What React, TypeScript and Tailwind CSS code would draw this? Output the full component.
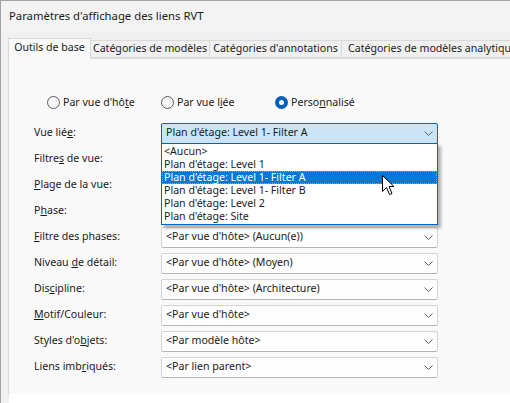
import { ReactNode } from 'react'

const rows: { label: ReactNode; value: string }[] = [
  { label: <>Vue lié<u>e</u>:</>, value: "Plan d'étage: Level 1- Filter A" },
  { label: <>Filtre<u>s</u> de vue:</>, value: '' },
  { label: <><u>P</u>lage de la vue:</>, value: '' },
  { label: <>P<u>h</u>ase:</>, value: '' },
  { label: <><u>F</u>iltre des phases:</>, value: "<Par vue d'hôte> (Aucun(e))" },
  { label: <>Niveau <u>d</u>e détail:</>, value: "<Par vue d'hôte> (Moyen)" },
  { label: <>Dis<u>c</u>ipline:</>, value: "<Par vue d'hôte> (Architecture)" },
  { label: <><u>M</u>otif/Couleur:</>, value: "<Par vue d'hôte>" },
  { label: <>Styles d'o<u>b</u>jets:</>, value: '<Par modèle hôte>' },
  { label: <>Liens imb<u>r</u>iqués:</>, value: '<Par lien parent>' },
]

const options = [
  '<Aucun>',
  "Plan d'étage: Level 1",
  "Plan d'étage: Level 1- Filter A",
  "Plan d'étage: Level 1- Filter B",
  "Plan d'étage: Level 2",
  "Plan d'étage: Site",
]

function Chevron() {
  return (
    <svg width="9" height="5" viewBox="0 0 9 5" className="shrink-0">
      <path d="M0.5 0.5 L4.5 4.5 L8.5 0.5" fill="none" stroke="#606060" strokeWidth="1" />
    </svg>
  )
}

function Radio({ checked, children }: { checked?: boolean; children: ReactNode }) {
  return (
    <div className="flex items-center gap-[3px]">
      {checked ? (
        <span className="flex h-[13px] w-[13px] items-center justify-center rounded-full bg-[#005fb8]">
          <span className="h-[5px] w-[5px] rounded-full bg-white" />
        </span>
      ) : (
        <span className="h-[13px] w-[13px] rounded-full border border-[#5d5d5d] bg-[#f6f6f6]" />
      )}
      <span>{children}</span>
    </div>
  )
}

export default function App() {
  return (
    <div className="relative h-[403px] w-[510px] overflow-hidden border-l border-t border-[#a3a3a3] bg-[#f0f0f0] font-['Noto_Sans',sans-serif] text-[10.6px] text-[#1a1a1a]">
      <div className="flex h-[30px] items-center bg-[#f3f3f3] pl-[8px] text-[11.3px]">
        Paramètres d'affichage des liens RVT
      </div>
      <div className="flex h-[27px] items-end whitespace-nowrap pl-[7px]">
        <div className="relative z-10 -mb-px flex h-[21px] w-[83px] shrink-0 items-center justify-center border border-b-0 border-[#d9d9d9] bg-[#f9f9f9] pb-[3px]">
          Outils de base
        </div>
        <div className="flex h-[18px] w-[119px] shrink-0 items-center justify-center border border-l-0 border-[#d9d9d9]">
          Catégories de modèles
        </div>
        <div className="flex h-[18px] w-[132px] shrink-0 items-center justify-center border border-l-0 border-[#d9d9d9]">
          Catégories d'annotations
        </div>
        <div className="flex h-[18px] w-[180px] shrink-0 items-center border border-l-0 border-[#d9d9d9] pl-[6px]">
          Catégories de modèles analytique
        </div>
      </div>
      <div className="ml-[7px] h-[336px] border-l border-t border-[#d9d9d9] bg-[#f9f9f9]">
        <div className="mt-[34px] flex h-[20px] items-center pl-[38px]">
          <div className="w-[114px]">
            <Radio>Par vue d'hô<u>t</u>e</Radio>
          </div>
          <div className="w-[114px]">
            <Radio>Par vue l<u>i</u>ée</Radio>
          </div>
          <Radio checked>Perso<u>n</u>nalisé</Radio>
        </div>
        <div className="relative mt-[7px] flex flex-col pl-[25px]">
          {rows.map((r, i) => (
            <div key={i} className="flex h-[26px] items-center">
              <div className="w-[127px]">{r.label}</div>
              {i === 0 ? (
                <div className="flex h-[21px] w-[277px] items-center justify-between rounded-[2px] border border-[#0067c0] bg-[#cce4f7] pl-[4px] pr-[4px]">
                  <span>{r.value}</span>
                  <Chevron />
                </div>
              ) : i < 4 ? null : (
                <div className="flex h-[21px] w-[277px] items-center justify-between rounded-[2px] border border-[#d4d4d4] border-b-[#b5b5b5] bg-[#fdfdfd] pl-[4px] pr-[4px]">
                  <span>{r.value}</span>
                  <Chevron />
                </div>
              )}
            </div>
          ))}
          <div className="absolute left-[152px] top-[23px] w-[277px] border border-[#0067c0] bg-white py-px shadow-[3px_3px_3px_rgba(0,0,0,0.3)]">
            {options.map((o, i) =>
              i === 2 ? (
                <div
                  key={i}
                  className="flex h-[13px] items-center border border-dotted border-[#f7941d] bg-[#0078d7] pl-[1px] leading-none text-white"
                >
                  {o}
                </div>
              ) : (
                <div key={i} className="flex h-[13px] items-center pl-[2px] leading-none">
                  {o}
                </div>
              ),
            )}
          </div>
        </div>
      </div>
      <div className="ml-[8px] h-[10px] bg-white" />
      <svg
        className="absolute left-[381px] top-[174px]"
        width="13"
        height="21"
        viewBox="0 0 13 21"
      >
        <path
          d="M0.5 0.5 L0.5 16.5 L4.5 12.5 L7.5 19.5 L10 18.5 L7 11.5 L12 11.5 Z"
          fill="white"
          stroke="black"
          strokeWidth="1"
          strokeLinejoin="miter"
        />
      </svg>
    </div>
  )
}
